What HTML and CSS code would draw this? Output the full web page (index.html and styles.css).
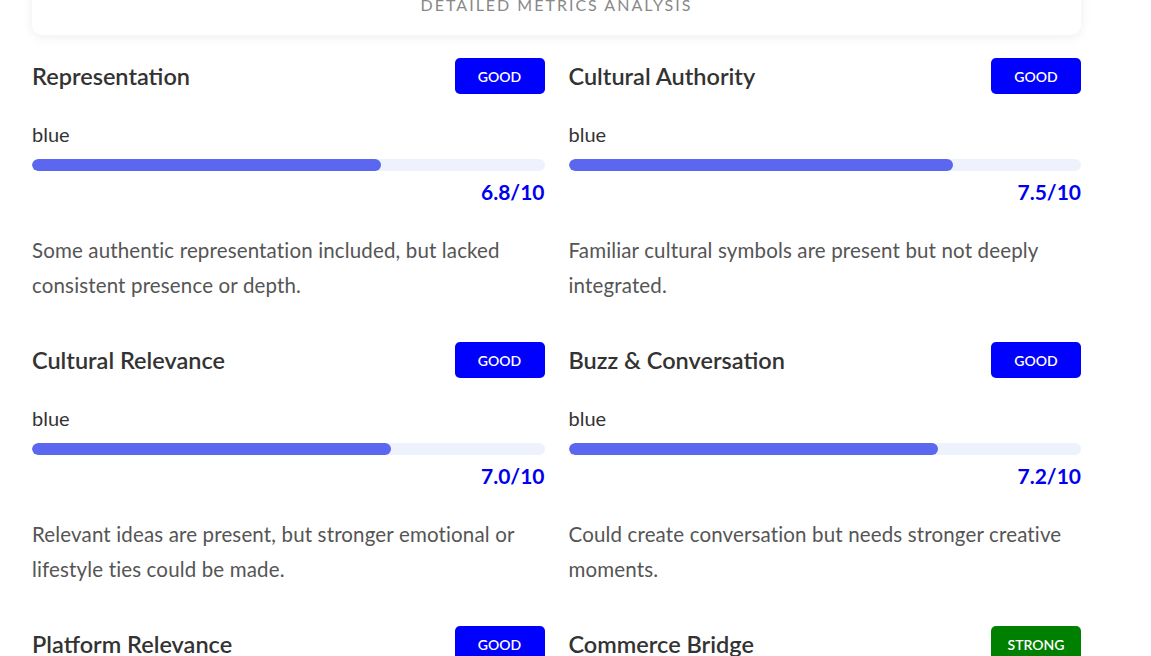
FILE: index.html
```html
<!DOCTYPE html>
<html lang="en">
<head>
<meta charset="utf-8">
<title>Detailed Metrics Analysis</title>
<link rel="stylesheet" href="styles.css">
</head>
<body>
<main class="page">
  <section class="summary-card">
    <h2 class="summary-title">Detailed Metrics Analysis</h2>
  </section>
  <section class="metrics">
    <article class="metric">
      <header class="metric-head"><h3 class="metric-name">Representation</h3><span class="badge badge-good">GOOD</span></header>
      <div class="metric-label">blue</div>
      <div class="track"><div class="fill" style="width:68%"></div></div>
      <div class="score">6.8/10</div>
      <p class="desc">Some authentic representation included, but lacked consistent presence or depth.</p>
    </article>
    <article class="metric">
      <header class="metric-head"><h3 class="metric-name">Cultural Authority</h3><span class="badge badge-good">GOOD</span></header>
      <div class="metric-label">blue</div>
      <div class="track"><div class="fill" style="width:75%"></div></div>
      <div class="score">7.5/10</div>
      <p class="desc">Familiar cultural symbols are present but not deeply integrated.</p>
    </article>
    <article class="metric">
      <header class="metric-head"><h3 class="metric-name">Cultural Relevance</h3><span class="badge badge-good">GOOD</span></header>
      <div class="metric-label">blue</div>
      <div class="track"><div class="fill" style="width:70%"></div></div>
      <div class="score">7.0/10</div>
      <p class="desc">Relevant ideas are present, but stronger emotional or lifestyle ties could be made.</p>
    </article>
    <article class="metric">
      <header class="metric-head"><h3 class="metric-name">Buzz &amp; Conversation</h3><span class="badge badge-good">GOOD</span></header>
      <div class="metric-label">blue</div>
      <div class="track"><div class="fill" style="width:72%"></div></div>
      <div class="score">7.2/10</div>
      <p class="desc">Could create conversation but needs stronger creative moments.</p>
    </article>
    <article class="metric">
      <header class="metric-head"><h3 class="metric-name">Platform Relevance</h3><span class="badge badge-good">GOOD</span></header>
      <div class="metric-label">blue</div>
      <div class="track"><div class="fill" style="width:70%"></div></div>
      <div class="score">7.0/10</div>
      <p class="desc">Content fits the platform but could be better tailored.</p>
    </article>
    <article class="metric">
      <header class="metric-head"><h3 class="metric-name">Commerce Bridge</h3><span class="badge badge-strong">STRONG</span></header>
      <div class="metric-label">blue</div>
      <div class="track"><div class="fill" style="width:80%"></div></div>
      <div class="score">8.0/10</div>
      <p class="desc">Clear path from content to purchase.</p>
    </article>
  </section>
</main>
</body>
</html>
```

FILE: styles.css
```css
html, body {
  margin: 0;
  padding: 0;
  background: #ffffff;
  overflow: hidden;
}

body {
  font-family: "Lato", "Noto Sans", sans-serif;
  color: #333333;
}

.page {
  width: 1049px;
  margin-left: 32px;
}

.summary-card {
  margin-top: -45px;
  padding: 40px 24px 20px;
  background: #ffffff;
  border-radius: 10px;
  box-shadow: 0 2px 12px rgba(0, 0, 0, 0.07);
  text-align: center;
}

.summary-title {
  margin: 0;
  font-size: 16px;
  line-height: 20px;
  font-weight: 400;
  letter-spacing: 2px;
  text-transform: uppercase;
  color: #888888;
}

.metrics {
  margin-top: 23px;
  display: grid;
  grid-template-columns: 1fr 1fr;
  column-gap: 24px;
  row-gap: 39px;
}

.metric-head {
  display: flex;
  justify-content: space-between;
  align-items: center;
  height: 36px;
}

.metric-name {
  margin: 0;
  font-size: 23.5px;
  font-weight: 600;
  color: #333333;
}

.badge {
  width: 90px;
  height: 36px;
  border-radius: 5px;
  display: flex;
  align-items: center;
  justify-content: center;
  color: #ffffff;
  font-size: 14px;
  font-weight: 600;
}

.badge-good { background: #0000ff; }
.badge-strong { background: #008000; }

.metric-label {
  margin-top: 26px;
  font-size: 20px;
  line-height: 28px;
  color: #333333;
}

.track {
  margin-top: 11px;
  height: 12px;
  border-radius: 6px;
  background: #eef2fd;
  overflow: hidden;
}

.fill {
  height: 100%;
  border-radius: 6px;
  background: #5b67ee;
}

.score {
  margin-top: 7px;
  text-align: right;
  font-size: 21px;
  line-height: 28px;
  font-weight: 700;
  color: #0000ee;
}

.desc {
  margin: 27px 0 0;
  font-size: 20.5px;
  line-height: 35px;
  letter-spacing: 0.15px;
  color: #555555;
}
```
